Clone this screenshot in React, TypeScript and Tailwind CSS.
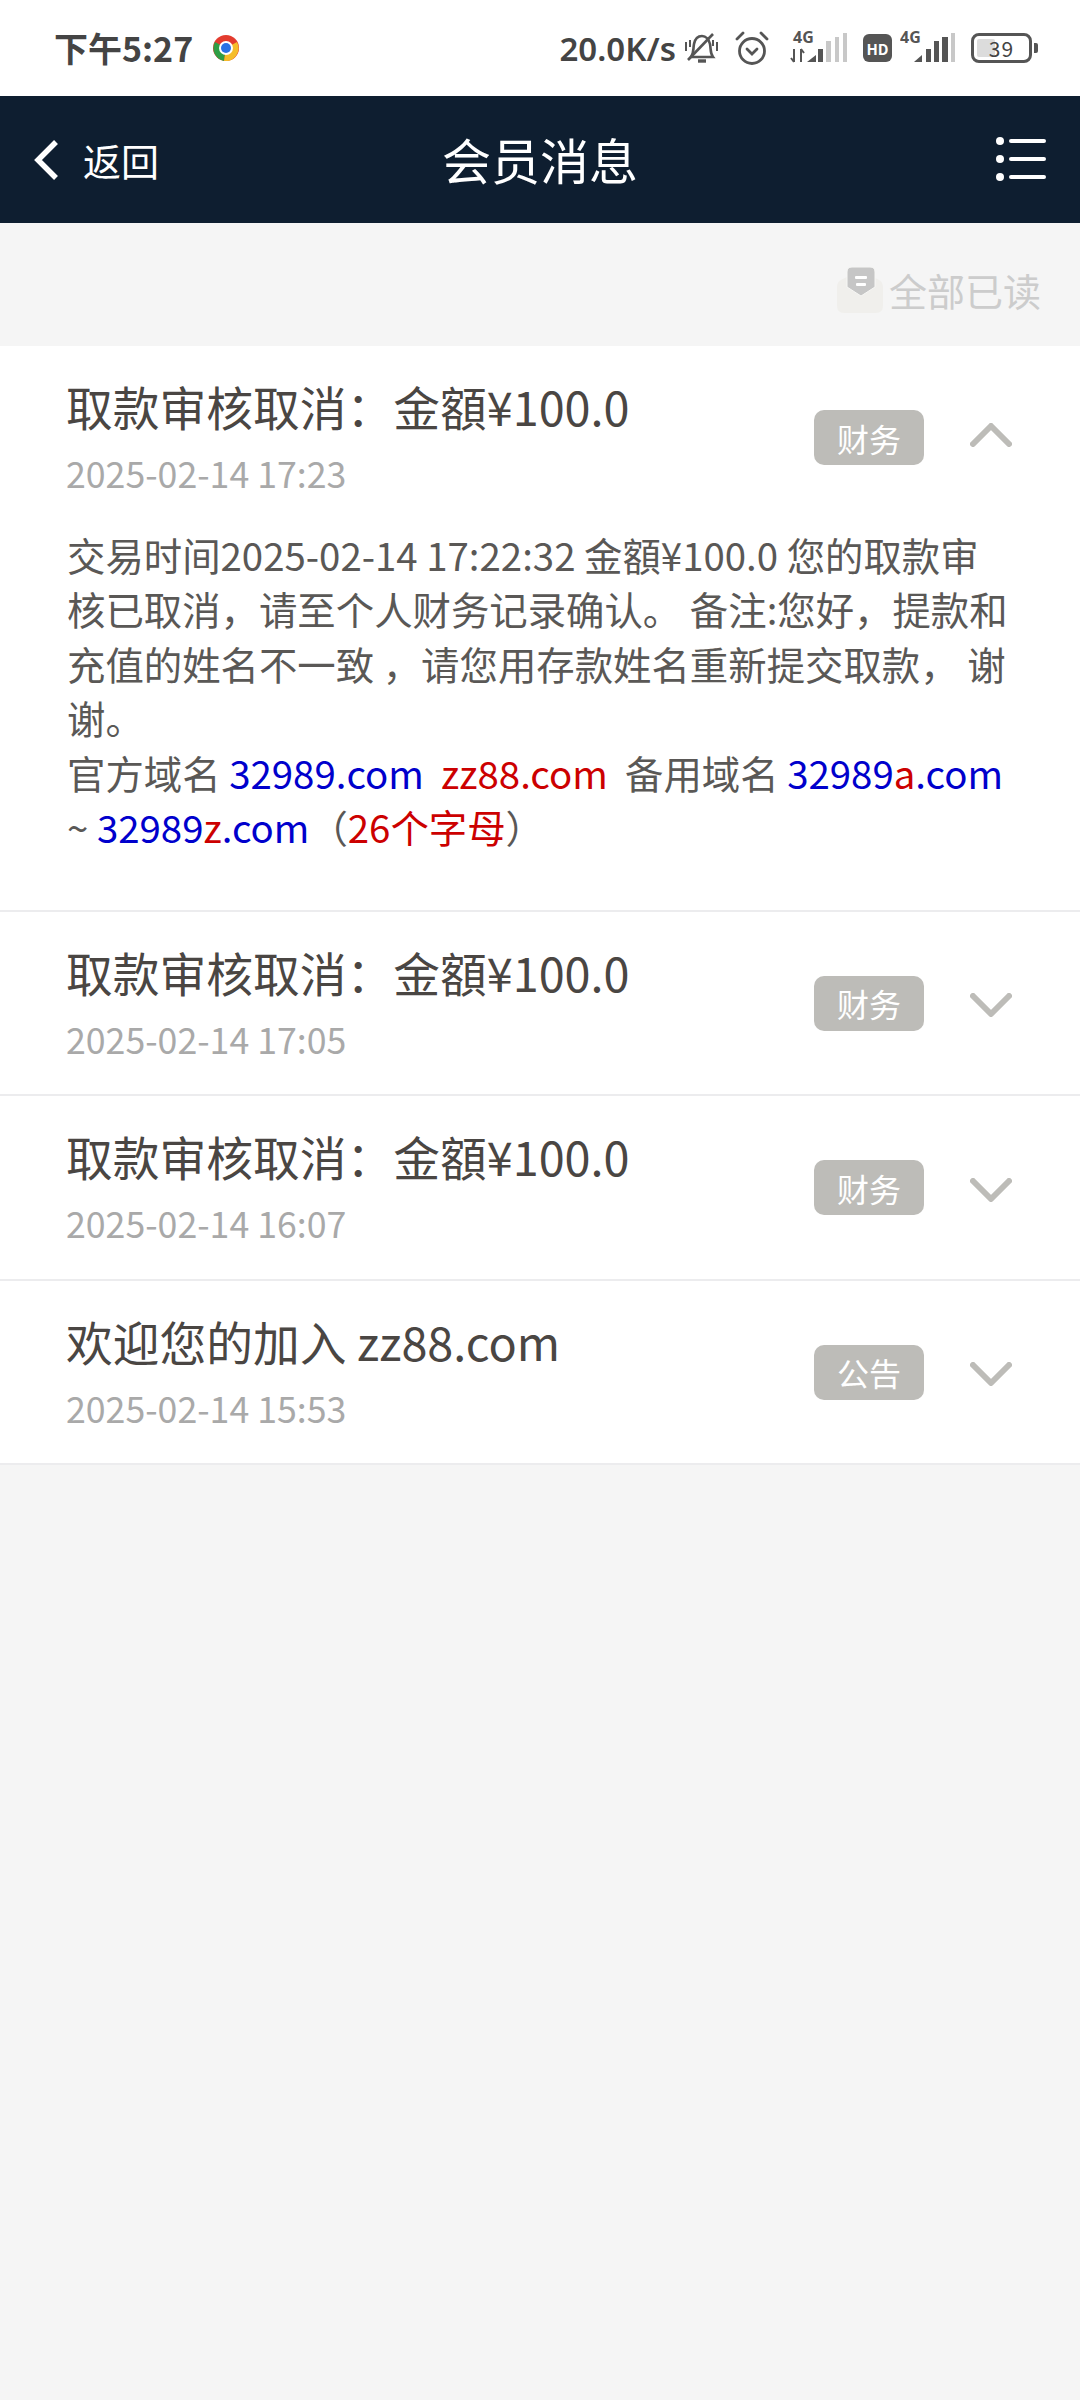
import React from "react";

const F = { fontFamily: '"Noto Sans CJK SC","Noto Sans",sans-serif' };

function Chevron({ up }: { up?: boolean }) {
  return (
    <svg width="42" height="24" viewBox="0 0 42 24" fill="none" className={up ? "-mt-[5px] shrink-0" : "mt-[4px] shrink-0"}>
      <path d={up ? "M3 21 L21 3 L39 21" : "M3 3 L21 21 L39 3"} stroke="#bdbcb8" strokeWidth="6" strokeLinecap="round" strokeLinejoin="round" />
    </svg>
  );
}

function Item({ title, date, tag, open, children }: { title: string; date: string; tag: string; open?: boolean; children?: React.ReactNode }) {
  return (
    <div className="border-b-2 border-[#ececee] bg-white">
      <div className="flex h-[182.5px] items-start pl-[66px] pr-[68px]">
        <div className="flex-1 pt-[25px]">
          <div className="text-[46.75px] leading-[70px] text-[#4a4643]">{title}</div>
          <div className="mt-[6px] text-[35.7px] leading-[52px] text-[#a9a9a9]">{date}</div>
        </div>
        <div className="mt-[64px] flex h-[55px] items-center">
          <div className="flex h-[55px] w-[110px] items-center justify-center rounded-[10px] bg-[#bdbcb8] text-[32px] text-white">{tag}</div>
          <div className="ml-[46px] flex w-[42px] items-center justify-center"><Chevron up={open} /></div>
        </div>
      </div>
      {children}
    </div>
  );
}

function StatusBar() {
  return (
    <div className="flex h-[96px] items-center bg-white pl-[54px] pr-[42px] text-[#444]">
      <span className="text-[34px] font-bold leading-none">下午5:27</span>
      <svg width="26" height="26" viewBox="0 0 26 26" className="ml-[20px]">
        <circle cx="13" cy="13" r="13" fill="#e33b2e" />
        <path d="M13 13 L2 7 A13 13 0 0 0 11 26 Z" fill="#2f9e44" />
        <path d="M13 13 L24 7 A13 13 0 0 1 11 26 Z" fill="#f5bd2a" />
        <circle cx="13" cy="13" r="7" fill="#fff" />
        <circle cx="13" cy="13" r="5" fill="#2a71e5" />
      </svg>
      <div className="flex-1" />
      <span className="text-[33px] font-semibold leading-none" style={{ fontFamily: '"Noto Sans",sans-serif' }}>20.0K/s</span>
      <svg width="35" height="32" viewBox="0 0 35 32" fill="none" stroke="#555" strokeWidth="2.6" className="ml-[8px]">
        <path d="M7 25 C10 21 9 17 10 12 C11 7 14 4 18 4 C22 4 25 8 26 12 C27 17 26 21 29 25 Z" />
        <path d="M14 29 H22" strokeWidth="3.4" />
        <path d="M4 28 L29 2" />
        <path d="M2 10 V19 M6 8 V15 M33 10 V19 M29 8 V14" strokeWidth="2" />
      </svg>
      <svg width="34" height="36" viewBox="0 0 34 36" fill="none" stroke="#555" strokeWidth="2.8" className="ml-[16px]">
        <circle cx="17" cy="21" r="12.5" />
        <path d="M12 19 L17 24 L22 19" strokeLinecap="round" />
        <path d="M2 9 L8 3 M32 9 L26 3" strokeLinecap="round" />
      </svg>
      <svg width="57" height="48" viewBox="0 0 57 48" className="ml-[21px]">
        <text x="3" y="19" fontSize="16" fontWeight="700" fill="#555" fontFamily="Noto Sans">4G</text>
        <path d="M4 25 V38 M1 34 L4 38 M11 38 V25 M11 25 L14 29" stroke="#555" strokeWidth="2" fill="none" />
        <path d="M17 38 L26 31 V38 Z" fill="#555" />
        <rect x="28" y="25" width="5" height="13" fill="#555" />
        <rect x="36" y="17" width="5" height="21" fill="#c8c8c8" />
        <rect x="45" y="13" width="4" height="25" fill="#c8c8c8" />
        <rect x="53" y="9" width="4" height="29" fill="#c8c8c8" />
      </svg>
      <div className="ml-[16px] flex h-[28px] w-[29px] items-center justify-center rounded-[6px] bg-[#555] text-[15px] font-bold leading-none text-white">HD</div>
      <svg width="55" height="48" viewBox="0 0 55 48" className="ml-[8px]">
        <text x="0" y="19" fontSize="16" fontWeight="700" fill="#555" fontFamily="Noto Sans">4G</text>
        <path d="M14 38 L22 31 V38 Z" fill="#555" />
        <rect x="26" y="25" width="5" height="13" fill="#555" />
        <rect x="34" y="17" width="5" height="21" fill="#555" />
        <rect x="42" y="13" width="6" height="25" fill="#555" />
        <rect x="51" y="9" width="4" height="29" fill="#c8c8c8" />
      </svg>
      <div className="relative ml-[16px] flex h-[30px] w-[61px] items-center justify-center rounded-[8px] border-[3px] border-[#555] text-[21px] leading-none">
        <div className="absolute bottom-[3px] left-[3px] top-[3px] w-[18px] rounded-[2px] bg-[#dcdcdc]" />
        <span className="relative tracking-[1px]">39</span>
      </div>
      <div className="ml-[2px] h-[10px] w-[4px] rounded-r-[2px] bg-[#555]" />
    </div>
  );
}

export default function App() {
  return (
    <div className="flex min-h-[2400px] w-[1080px] flex-col bg-[#f5f5f5]" style={F}>
      <StatusBar />
      <div className="relative flex h-[127px] items-center justify-center bg-[#0e1e30] text-white">
        <div className="absolute left-[34px] top-[44px] flex items-center">
          <svg width="24" height="40" viewBox="0 0 24 40" fill="none">
            <path d="M22 2 L4 20 L22 38" stroke="#fff" strokeWidth="5.5" />
          </svg>
          <span className="ml-[25px] text-[38px] leading-none">返回</span>
        </div>
        <span className="-mt-[2px] text-[49px] leading-none">会员消息</span>
        <div className="absolute right-[34px] top-[41px] flex flex-col gap-[10px]">
          {[0, 1, 2].map((i) => (
            <div key={i} className="flex items-center gap-[5px]">
              <div className="h-[8px] w-[8px] rounded-full bg-white" />
              <div className="h-[4px] w-[37px] rounded-full bg-white" />
            </div>
          ))}
        </div>
      </div>
      <div className="flex h-[123px] items-center justify-end pr-[39px] pt-[11px]">
        <svg width="46" height="46" viewBox="0 0 46 46" className="mr-[6px]">
          <path d="M0 20 Q0 15 4 13 L23 3 L42 13 Q46 15 46 20 V39 Q46 46 39 46 H7 Q0 46 0 39 Z" fill="#f0efec" />
          <path d="M10 5 Q10 0 15 0 H33 Q38 0 38 5 V20 L24 29 L10 20 Z" fill="#c6c6c6" stroke="#f7f7f5" strokeWidth="1" />
          <rect x="18" y="9" width="12" height="3" rx="1" fill="#fff" />
          <rect x="19" y="16" width="10" height="3" rx="1" fill="#fff" />
        </svg>
        <span className="text-[38px] leading-none text-[#cccccc]">全部已读</span>
      </div>
      <Item title="取款审核取消：金額¥100.0" date="2025-02-14 17:23" tag="财务" open>
        <div className="-mt-[1.5px] pb-[56.5px] pl-[67px] pr-[68px] text-[38.4px] leading-[54.4px] text-[#5a5856]">
          <p>交易时间2025-02-14 17:22:32 金額¥100.0 您的取款审核已取消，请至个人财务记录确认。 备注:您好，提款和充值的姓名不一致 ，请您用存款姓名重新提交取款， 谢谢。</p>
          <p>
            官方域名 <span className="text-[#0000cc]">32989.com</span>&nbsp; <span className="text-[#cc0000]">zz88.com</span>&nbsp; 备用域名 <span className="text-[#0000cc]">32989</span><span className="text-[#cc0000]">a</span><span className="text-[#0000cc]">.com</span> ~ <span className="text-[#0000cc]">32989</span><span className="text-[#cc0000]">z</span><span className="text-[#0000cc]">.com</span>（<span className="text-[#cc0000]">26个字母</span>）
          </p>
        </div>
      </Item>
      <Item title="取款审核取消：金額¥100.0" date="2025-02-14 17:05" tag="财务" />
      <Item title="取款审核取消：金額¥100.0" date="2025-02-14 16:07" tag="财务" />
      <Item title="欢迎您的加入 zz88.com" date="2025-02-14 15:53" tag="公告" />
    </div>
  );
}
